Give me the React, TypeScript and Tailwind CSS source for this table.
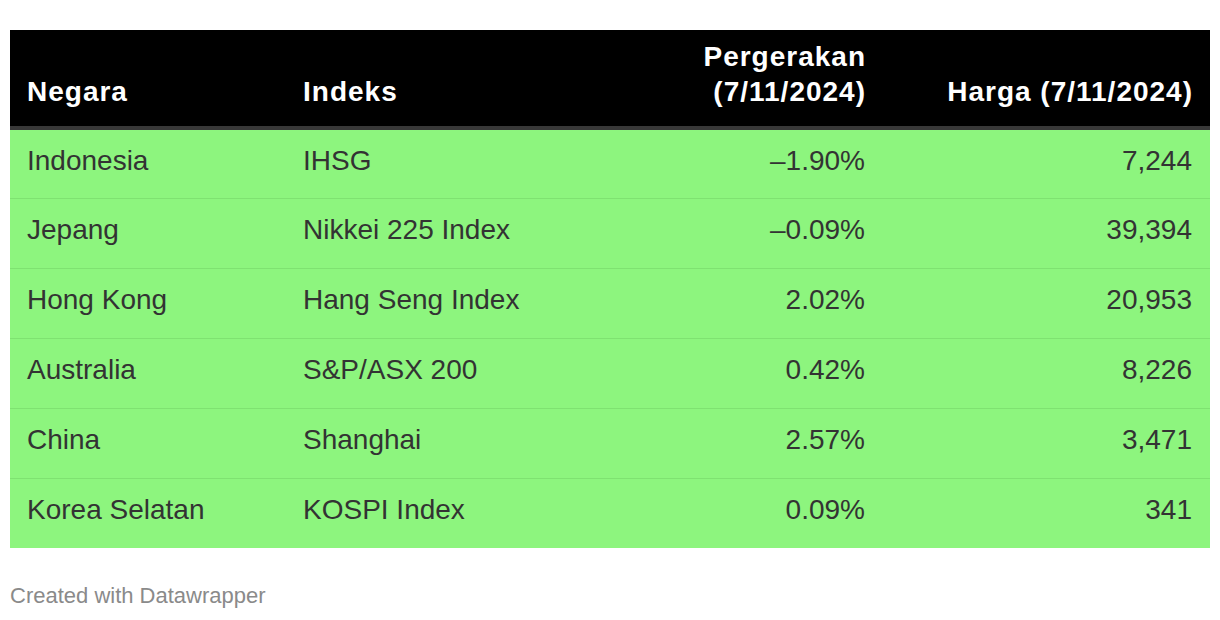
import React from "react";

const rows = [
  ["Indonesia", "IHSG", "\u20131.90%", "7,244"],
  ["Jepang", "Nikkei 225 Index", "\u20130.09%", "39,394"],
  ["Hong Kong", "Hang Seng Index", "2.02%", "20,953"],
  ["Australia", "S&P/ASX 200", "0.42%", "8,226"],
  ["China", "Shanghai", "2.57%", "3,471"],
  ["Korea Selatan", "KOSPI Index", "0.09%", "341"],
];

export default function App() {
  return (
    <div
      className="w-[1220px] h-[620px] bg-white px-[10px] pt-[30px]"
      style={{ fontFamily: '"Liberation Sans", Arial, sans-serif' }}
    >
      <div className="w-[1200px]">
        <div className="grid grid-cols-[276px_300px_296px_328px] h-[100px] bg-black border-b-4 border-[#383838] text-white font-bold text-[28px] leading-[35px] tracking-[1px] items-end pb-[17px]">
          <div className="pl-[17px]">Negara</div>
          <div className="pl-[17px]">Indeks</div>
          <div className="pr-[16px] text-right">
            Pergerakan
            <br />
            (7/11/2024)
          </div>
          <div className="pr-[17px] text-right">Harga (7/11/2024)</div>
        </div>
        {rows.map((r, i) => (
          <div
            key={i}
            className={
              "grid grid-cols-[276px_300px_296px_328px] bg-[#8df57e] text-[#333333] text-[28px] leading-[32px] pt-[15px] " +
              (i === 0 ? "h-[68px]" : "h-[70px] border-t border-[#7fe271]")
            }
          >
            <div className="pl-[17px]">{r[0]}</div>
            <div className="pl-[17px]">{r[1]}</div>
            <div className="pr-[17px] text-right">{r[2]}</div>
            <div className="pr-[18px] text-right">{r[3]}</div>
          </div>
        ))}
      </div>
      <div className="mt-[36px] text-[22px] leading-[24px] text-[#8a8a8a]">
        Created with Datawrapper
      </div>
    </div>
  );
}
